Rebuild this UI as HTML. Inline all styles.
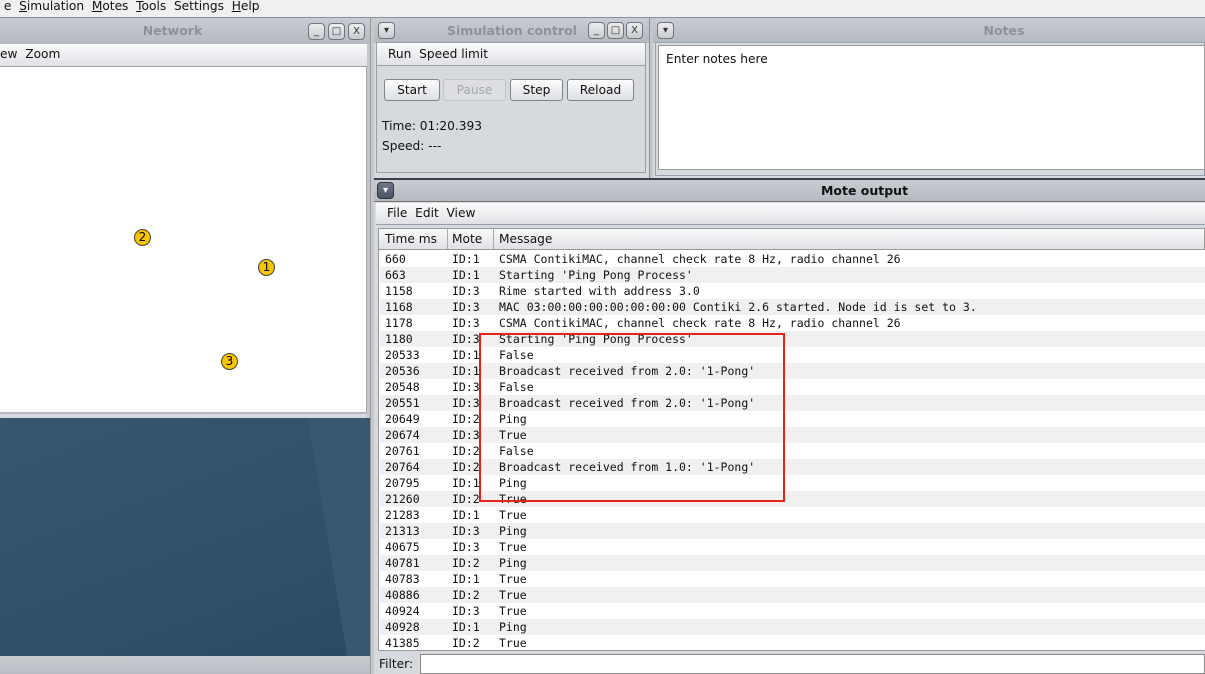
<!DOCTYPE html><html><head><style>
*{margin:0;padding:0;box-sizing:border-box}
body{width:1205px;height:674px;overflow:hidden;position:relative;background:#d6d9de;font-family:"DejaVu Sans","Liberation Sans",sans-serif;font-size:12.2px;color:#111}
.a{position:absolute}
.tb{background:linear-gradient(#c9ccd2,#b5b9c0);color:#8e9196;font-weight:bold;text-align:center;font-size:12.5px}
.menu{background:linear-gradient(#fbfbfc,#dfe1e5);border-bottom:1px solid #9aa0a8}
.btn{position:absolute;top:79px;height:22px;border:1px solid #7f858c;border-radius:3px;background:linear-gradient(#fdfdfd,#dcdee2);text-align:center;line-height:20px}
.ic{position:absolute;width:17px;height:17px;border:1px solid #6f757d;border-radius:4px;background:linear-gradient(#eee,#c8cbd0);font-size:10px;text-align:center;line-height:15px;color:#333}
.mote{position:absolute;width:17px;height:17px;border-radius:50%;background:#f7c400;border:1px solid #444;font-size:12px;line-height:15px;text-align:center;color:#000}
.row{position:absolute;left:380px;width:825px;height:16px;font-family:"DejaVu Sans Mono","Liberation Mono",monospace;font-size:11.5px;line-height:16px}
.row span{position:absolute}
.g{background:#f0f0f0}
</style></head><body>
<div class="a" style="left:0;top:0;width:1205px;height:17px;background:#eef0f2;line-height:12px">&nbsp;e &nbsp;<u>S</u>imulation &nbsp;<u>M</u>otes &nbsp;<u>T</u>ools &nbsp;Settings &nbsp;<u>H</u>elp</div>
<div class="a" style="left:0;top:17px;width:1205px;height:1px;background:#8a9099"></div>
<!-- Network -->
<div class="a tb" style="left:0;top:18px;width:370px;height:26px;line-height:26px;padding-right:25px">Network</div>
<div class="ic" style="left:308px;top:23px">_</div><div class="ic" style="left:328px;top:23px">□</div><div class="ic" style="left:348px;top:23px">X</div>
<div class="a menu" style="left:0;top:44px;width:370px;height:23px;line-height:21px">ew &nbsp;Zoom</div>
<div class="a" style="left:0;top:67px;width:367px;height:347px;background:#fff;border-right:1px solid #aaa;border-bottom:2px solid #b5b8bc"></div>
<div class="a" style="left:367px;top:44px;width:6px;height:374px;background:#c3c6cb"></div>
<div class="mote" style="left:134px;top:229px">2</div>
<div class="mote" style="left:258px;top:259px">1</div>
<div class="mote" style="left:221px;top:353px">3</div>
<div class="a" style="left:0;top:418px;width:373px;height:238px;background:linear-gradient(160deg,#37566f,#30506a 60%,#2c4862)"></div>
<div class="a" style="left:308px;top:418px;width:65px;height:238px;background:#385872;clip-path:polygon(0 0,100% 0,100% 100%,60% 100%)"></div>
<div class="a" style="left:0;top:656px;width:373px;height:18px;background:linear-gradient(#c8cbd0,#b9bdc3)"></div>
<!-- Sim control -->
<div class="a" style="left:370px;top:18px;width:4px;height:656px;background:#c4c7cc;border-left:1px solid #999"></div>
<div class="a tb" style="left:374px;top:18px;width:276px;height:25px;line-height:25px;padding-right:20px;padding-left:20px">Simulation control</div>
<div class="ic" style="left:378px;top:22px">▾</div>
<div class="ic" style="left:588px;top:22px">_</div><div class="ic" style="left:607px;top:22px">□</div><div class="ic" style="left:626px;top:22px">X</div>
<div class="a menu" style="left:376px;top:42px;width:270px;height:24px;line-height:22px;padding-left:11px;border:1px solid #9aa0a8">Run &nbsp;Speed limit</div>
<div class="a" style="left:376px;top:66px;width:270px;height:107px;border:1px solid #9aa0a8;border-top:0;background:#d6d9de"></div>
<div class="btn" style="left:384px;width:56px">Start</div>
<div class="btn" style="left:443px;width:63px;color:#a5a8ad;border-color:#c2c5c9;background:#dcdee2">Pause</div>
<div class="btn" style="left:510px;width:53px">Step</div>
<div class="btn" style="left:567px;width:67px">Reload</div>
<div class="a" style="left:382px;top:119px">Time: 01:20.393</div>
<div class="a" style="left:382px;top:139px">Speed: ---</div>
<!-- Notes -->
<div class="a" style="left:649px;top:18px;width:4px;height:160px;background:#c4c7cc;border-left:1px solid #8a9099"></div>
<div class="a tb" style="left:653px;top:18px;width:552px;height:25px;line-height:25px;padding-left:150px">Notes</div>
<div class="ic" style="left:657px;top:22px">▾</div>
<div class="a" style="left:655px;top:42px;width:550px;height:134px;border:1px solid #9aa0a8;background:#d6d9de"></div>
<div class="a" style="left:658px;top:45px;width:547px;height:125px;background:#fff;border:1px solid #999;padding:6px 0 0 7px">Enter notes here</div>
<!-- Mote output -->
<div class="a" style="left:374px;top:178px;width:831px;height:2px;background:#39424b"></div>
<div class="a tb" style="left:374px;top:180px;width:831px;height:22px;line-height:21px;color:#111;border-bottom:1px solid #777;padding-left:150px">Mote output</div>
<div class="ic" style="left:377px;top:182px;background:linear-gradient(#6e7888,#4a5463);color:#fff;border-color:#333">▾</div>
<div class="a menu" style="left:376px;top:203px;width:829px;height:22px;line-height:20px;padding-left:11px">File &nbsp;Edit &nbsp;View</div>
<div class="a" style="left:378px;top:228px;width:827px;height:22px;background:linear-gradient(#fafafb,#dfe1e5);border:1px solid #999;line-height:20px">
<span class="a" style="left:6px">Time ms</span><span class="a" style="left:68px;top:0;width:1px;height:20px;background:#aaa"></span>
<span class="a" style="left:73px">Mote</span><span class="a" style="left:114px;top:0;width:1px;height:20px;background:#aaa"></span>
<span class="a" style="left:120px">Message</span></div>
<div class="a" style="left:378px;top:250px;width:827px;height:401px;background:#fff;border-left:1px solid #999;border-bottom:1px solid #999"></div>
<div id="rows"></div>
<div class="a" style="left:374px;top:652px;width:831px;height:22px;background:#d6d9de"></div>
<div class="a" style="left:379px;top:657px">Filter:</div>
<div class="a" style="left:420px;top:654px;width:785px;height:20px;background:#fff;border:1px solid #888"></div>
<div class="a" style="left:479px;top:333px;width:306px;height:169px;border:2px solid #e8211d"></div>
<script>
var d=[["660","1","CSMA ContikiMAC, channel check rate 8 Hz, radio channel 26"],["663","1","Starting 'Ping Pong Process'"],["1158","3","Rime started with address 3.0"],["1168","3","MAC 03:00:00:00:00:00:00:00 Contiki 2.6 started. Node id is set to 3."],["1178","3","CSMA ContikiMAC, channel check rate 8 Hz, radio channel 26"],["1180","3","Starting 'Ping Pong Process'"],["20533","1","False"],["20536","1","Broadcast received from 2.0: '1-Pong'"],["20548","3","False"],["20551","3","Broadcast received from 2.0: '1-Pong'"],["20649","2","Ping"],["20674","3","True"],["20761","2","False"],["20764","2","Broadcast received from 1.0: '1-Pong'"],["20795","1","Ping"],["21260","2","True"],["21283","1","True"],["21313","3","Ping"],["40675","3","True"],["40781","2","Ping"],["40783","1","True"],["40886","2","True"],["40924","3","True"],["40928","1","Ping"],["41385","2","True"]];
var h="";d.forEach(function(r,i){h+='<div class="row'+(i%2?' g':'')+'" style="top:'+(251+i*16)+'px"><span style="left:5px">'+r[0]+'</span><span style="left:72px">ID:'+r[1]+'</span><span style="left:119px">'+r[2]+'</span></div>'});
document.getElementById("rows").innerHTML=h;
</script>
</body></html>
